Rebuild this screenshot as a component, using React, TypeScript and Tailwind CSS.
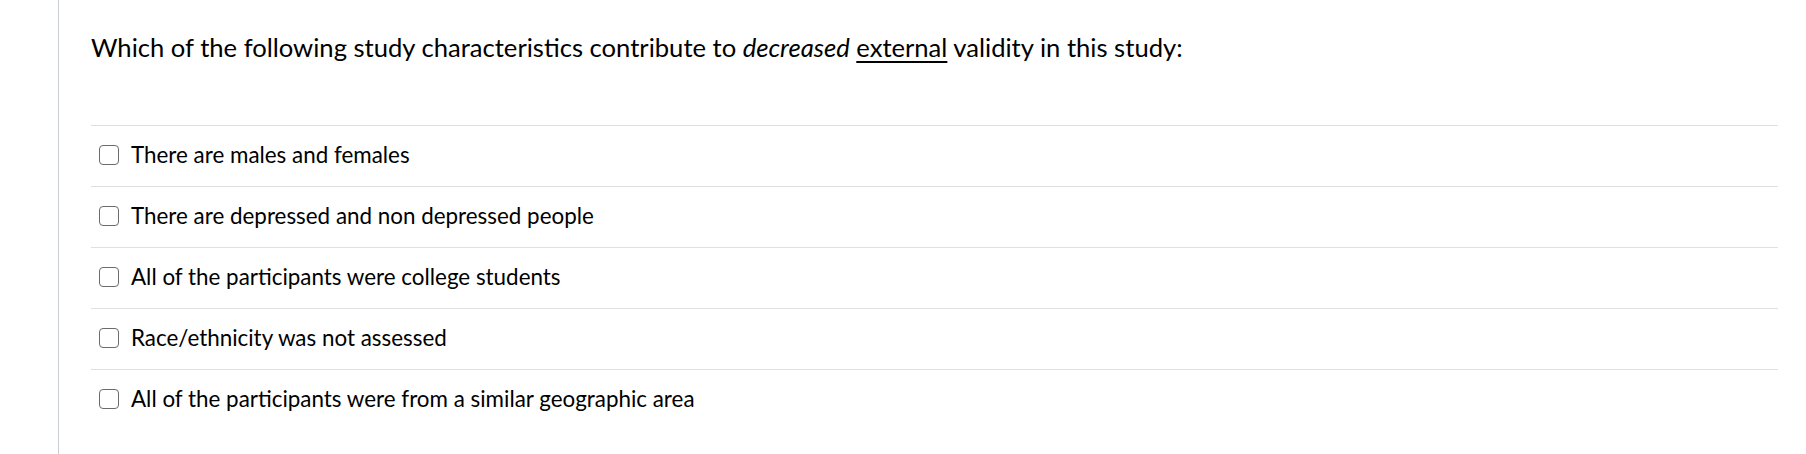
const options = [
  'There are males and females',
  'There are depressed and non depressed people',
  'All of the participants were college students',
  'Race/ethnicity was not assessed',
  'All of the participants were from a similar geographic area',
]

function Checkbox() {
  return (
    <span className="ml-2 mr-[12px] inline-block h-[20px] w-[20px] shrink-0 rounded-[4px] border-[1.5px] border-[#6b6b6b] bg-white" />
  )
}

export default function App() {
  return (
    <div className="min-h-[454px] bg-white pl-[58px] font-['Lato','Open_Sans',sans-serif] text-black">
      <div className="min-h-[454px] border-l border-[#c7cdd1] pl-[32px] pr-[28px]">
        <div className="pt-[29px] pb-[60px] text-[25.6px] leading-[36px]">
          Which of the following study characteristics contribute to <em>decreased</em>{' '}
          <span className="underline underline-offset-[4px]">external</span> validity in this study:
        </div>
        <div>
          {options.map((o) => (
            <label key={o} className="flex h-[61px] items-center border-t border-[#e0e0e0] pb-[2px] text-[22.4px]">
              <Checkbox />
              <span>{o}</span>
            </label>
          ))}
        </div>
      </div>
    </div>
  )
}
